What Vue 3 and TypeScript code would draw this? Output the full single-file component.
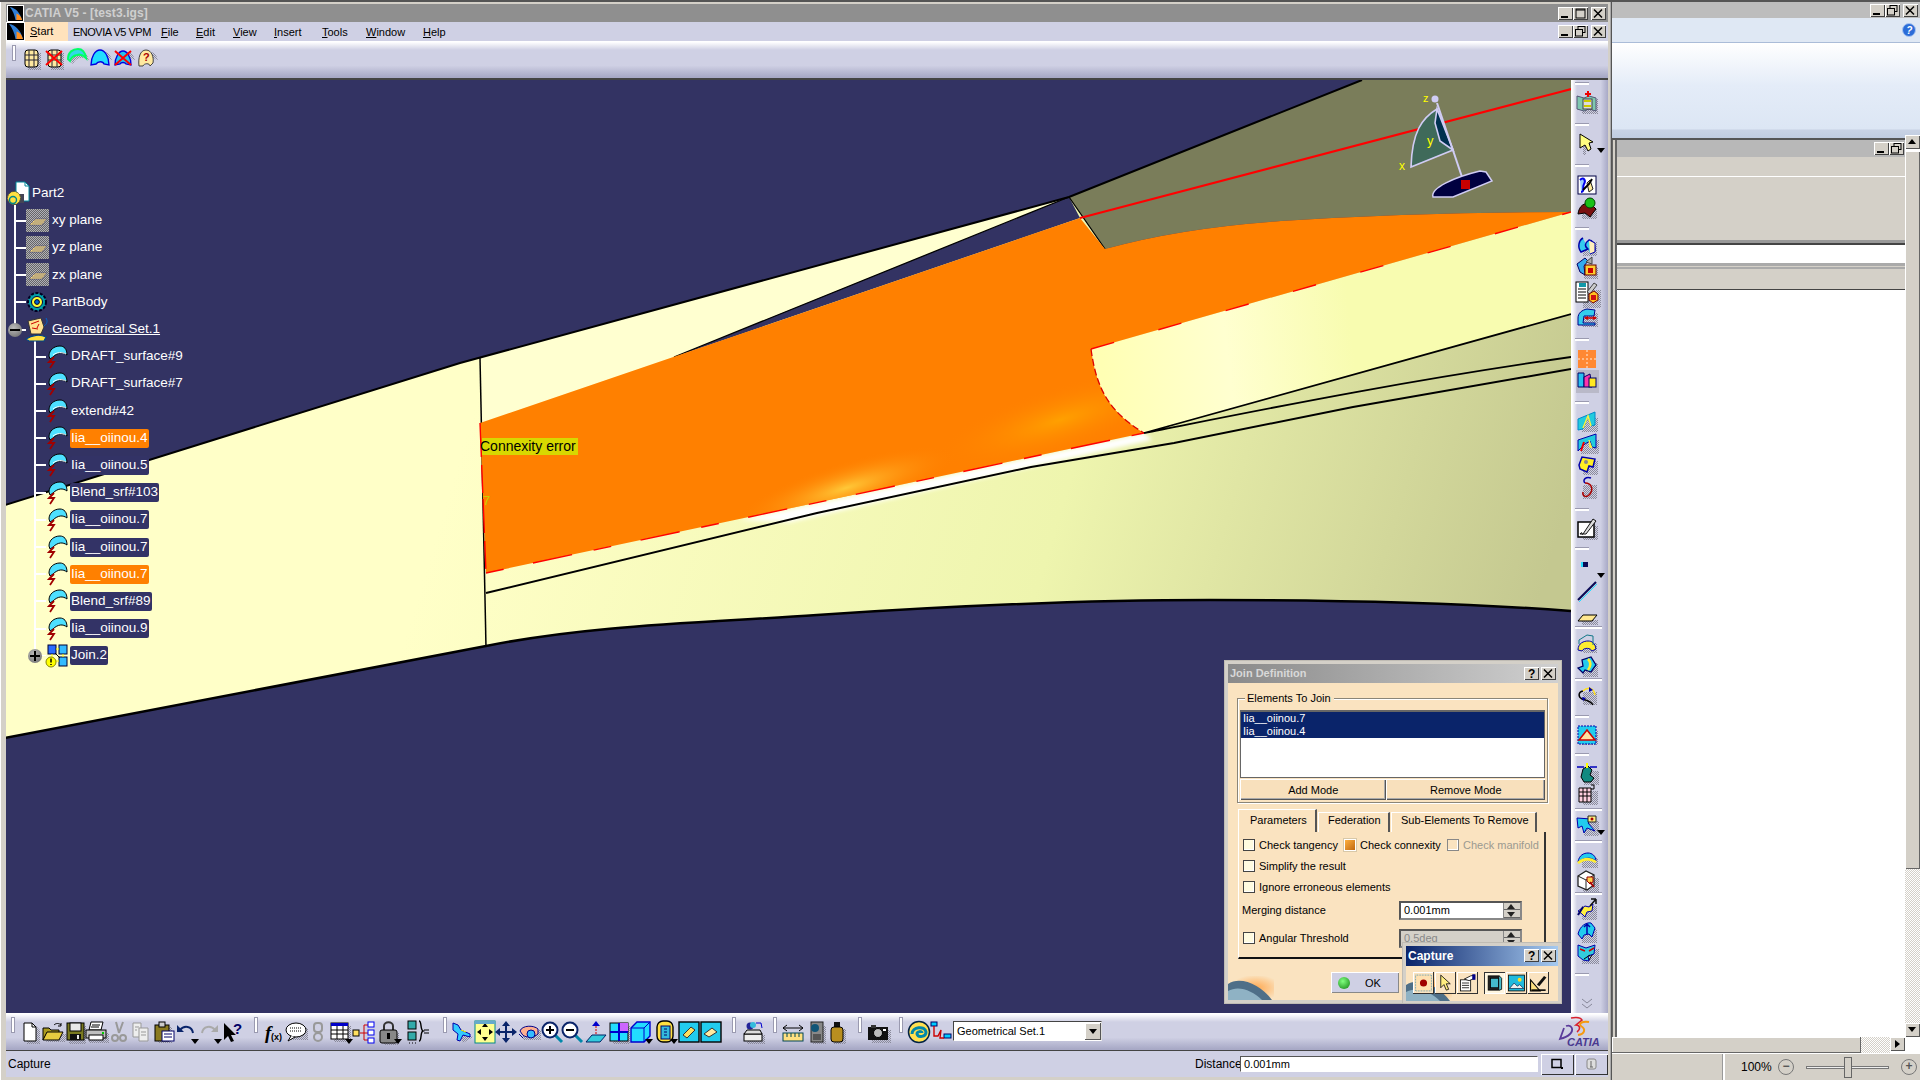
<script setup lang="ts">
const S = (d: string) => `<path d="${d}" fill="url(#dither)" transform="translate(3 3)"/>`
const dome = 'M3 13C3 6 8 3 13 3c4 0 7 3 8 9-3-3-6-4-9-3-3 .6-6 3-7 6z'
const X = '<path d="M4 5L20 19M20 5L4 19" stroke="#f00" stroke-width="2"/>'
const barrel = '<rect x="6" y="4" width="13" height="17" rx="3" fill="#ffe9a0" stroke="#000"/><path d="M10 4v17M15 4v17M6 9h13M6 14h13" stroke="#223" />'
const ICON: Record<string, string> = {
  barrel: S('M6 4h13v17H6z') + barrel,
  barrelx: S('M6 4h13v17H6z') + barrel + X,
  domeg: S(dome) + `<path d="${dome}" fill="#33d8e8" stroke="#00ff66" stroke-width="2"/>`,
  domeb: S(dome) + `<path d="M3 19C3 11 7 4 12 4s9 7 9 15l-5-1c-1-3-6-3-8 0z" fill="#22ddff" stroke="#0000e0" stroke-width="1.4"/>`,
  domex: S(dome) + `<path d="M4 19C4 11 8 5 12 5s8 6 8 14l-5-1c-1-2-5-2-6 0z" fill="#22c4f0" stroke="#0000e0" stroke-width="1.4"/>` + X,
  domeq: S(dome) + `<path d="M5 20c-1-8 1-16 7-16s8 8 7 13l-3 3c0-3-6-3-7 0z" fill="#ffe9a0" stroke="#444"/><text x="9" y="15" font-size="11" font-weight="700" fill="#a00" font-family="Liberation Sans">?</text>`,
  surf: `<path d="M3 11C3 5 8 1 14 1c4 0 7 3 7 9-4-3-9-3-14 2l-3 2z" fill="#4de0ff" stroke="#000"/><path d="M8 12L3 17h5l-4 6" stroke="#a00000" stroke-width="1.800" fill="none"/>`,
  surfw: `<path d="M3 11C3 5 8 1 14 1c4 0 7 3 7 9-4-3-9-3-14 2l-3 2z" fill="#4de0ff" stroke="#000"/><path d="M7 10c4-3 9-3 13-1" stroke="#fff" fill="none"/><path d="M8 12L3 17h5l-4 6" stroke="#a00000" stroke-width="1.800" fill="none"/>`,
  plane: `<rect width="23" height="23" fill="url(#dither2)"/><path d="M3 16l6-6h12l-5 6z" fill="#ffdf80" stroke="#557" stroke-width=".8"/><path d="M6 14h11M8 12h11" stroke="#557" stroke-width=".7"/>`,
  part: `<path d="M9 0h9l4 4v15H9z" fill="#fff" stroke="#089"/><path d="M18 0v4h4" fill="none" stroke="#089"/><rect x="8" y="12" width="9" height="9" fill="#445"/><circle cx="7" cy="16" r="6.500" fill="#ffe040" stroke="#553" stroke-dasharray="3 1"/><circle cx="6" cy="18" r="3.500" fill="none" stroke="#088" stroke-width="1.400"/>`,
  body: `<circle cx="11" cy="12" r="9" fill="#00a0a8" stroke="#002" stroke-dasharray="3 1.5" stroke-width="2"/><circle cx="11" cy="12" r="5.5" fill="#ffff30" stroke="#004"/><circle cx="11" cy="12" r="2.4" fill="#06c" stroke="#002"/>`,
  gset: `<path d="M2 3l13-3 3 9-3 7H5z" fill="#ffe090" stroke="#333"/><path d="M5 6l8-3M6 10l6 1M13 6l-2 4" stroke="#c00"/><path d="M0 21c6-4 14-5 20-2l-2 4H3z" fill="#ffe040" stroke="#048" stroke-width="1.200"/><path d="M20 0c2 3 1 6-2 8" stroke="#06c" fill="none"/>`,
  join: `<rect x="2" y="1" width="8" height="9" fill="#2a6cff" stroke="#003"/><rect x="13" y="1" width="8" height="9" fill="#33bbff" stroke="#003"/><rect x="13" y="13" width="8" height="9" fill="#33bbff" stroke="#003"/><path d="M10 5h3M10 17h3M6 10v3M17 10v3" stroke="#ff0"/><path d="M9 9l5 5" stroke="#000"/><circle cx="5" cy="18" r="5" fill="#ff0" stroke="#880"/><path d="M5 14.500v4M5 20v1" stroke="#000" stroke-width="1.500"/>`,
  new: S('M6 3h9l4 4v14H6z') + `<path d="M6 3h8l4 4v14H6z" fill="#fff" stroke="#000"/><path d="M14 3v4h4" fill="none" stroke="#000"/>`,
  open: S('M2 19h19l2-8H6z') + `<path d="M2 8h6l2 2h8v3H6l-4 7z" fill="#aa9a20" stroke="#000"/><path d="M2 20l4-8h16l-4 8z" fill="#e6cc40" stroke="#000"/><path d="M13 5c2-2 5-2 7 0" stroke="#000" fill="none"/><path d="M20 3v3h-3" stroke="#000" fill="none"/>`,
  save: S('M3 3h17v18H3z') + `<rect x="4" y="3" width="17" height="17" fill="#7a7a20" stroke="#000"/><rect x="7" y="3" width="11" height="8" fill="#e8e8e8" stroke="#000"/><rect x="7" y="14" width="11" height="6" fill="#111"/><rect x="14" y="15" width="2" height="4" fill="#eee"/>`,
  print: S('M2 10h20v10H2z') + `<path d="M7 2h12l-2 8H5z" fill="#fff" stroke="#000"/><path d="M8 5h8M7 7h8" stroke="#000"/><rect x="2" y="10" width="20" height="8" fill="#c0c0c0" stroke="#000"/><rect x="5" y="15" width="14" height="5" fill="#fff" stroke="#000"/><rect x="18" y="12" width="2" height="2" fill="#0c0"/>`,
  cut: `<path d="M9 2l3 11M16 2l-4 11" stroke="#999" stroke-width="2"/><circle cx="8" cy="18" r="3" fill="none" stroke="#999" stroke-width="2"/><circle cx="16" cy="18" r="3" fill="none" stroke="#999" stroke-width="2"/>`,
  copy: `<path d="M5 3h8v14H5z" fill="#eee" stroke="#999"/><path d="M11 8h9v13h-9z" fill="#eee" stroke="#999"/><path d="M13 12h5M13 15h5M7 7h4M7 10h2" stroke="#999"/>`,
  paste: S('M4 4h14v16H4z') + `<rect x="4" y="5" width="14" height="16" fill="#8a7a20" stroke="#000"/><rect x="8" y="2" width="6" height="5" fill="#ccc" stroke="#000"/><rect x="11" y="11" width="12" height="10" fill="#fff" stroke="#006"/><path d="M13 14h8M13 17h8" stroke="#006"/>`,
  undo: `<path d="M6 10c4-5 12-4 13 3" fill="none" stroke="#0a246a" stroke-width="2"/><path d="M3 5v7h7z" fill="#0a246a"/>`,
  redo: `<path d="M18 10c-4-5-12-4-13 3" fill="none" stroke="#aaa" stroke-width="2"/><path d="M21 5v7h-7z" fill="#aaa"/>`,
  what: `<path d="M3 3v17l4-4 3 6 3-1-3-6h5z" fill="#000"/><text x="12" y="14" font-size="15" font-weight="700" fill="#006" font-family="Liberation Sans">?</text>`,
  fx: `<text x="3" y="19" font-size="19" font-family="Liberation Serif" font-style="italic" font-weight="700">f</text><text x="9" y="20" font-size="9" font-family="Liberation Sans" font-weight="700">(x)</text>`,
  bubble: S('M3 5h18v12H3z') + `<ellipse cx="12" cy="10" rx="10" ry="7" fill="#fff" stroke="#000"/><path d="M7 16l-3 5 7-4" fill="#fff" stroke="#000"/><path d="M6 8h11M6 11h11" stroke="#000" stroke-dasharray="1 1"/>`,
  chain: `<rect x="8" y="3" width="8" height="9" rx="3" fill="none" stroke="#999" stroke-width="2"/><circle cx="12" cy="17" r="4" fill="none" stroke="#999" stroke-width="2"/>`,
  table: S('M3 3h17v16H3z') + `<rect x="3" y="3" width="17" height="16" fill="#fff" stroke="#000"/><rect x="3" y="3" width="17" height="3" fill="#0000c8"/><path d="M3 10h17M3 14h17M9 6v13M15 6v13" stroke="#000"/>`,
  tree: `<rect x="1" y="10" width="6" height="6" fill="#ffe060" stroke="#000"/><path d="M8 13h4M12 5v15M12 5h4M12 13h4M12 20h4" stroke="#c00"/><rect x="16" y="2" width="6" height="5" fill="#fff" stroke="#00e"/><rect x="16" y="10" width="6" height="5" fill="#fff" stroke="#00e"/><rect x="16" y="18" width="6" height="5" fill="#fff" stroke="#00e"/>`,
  lock: S('M4 10h15v12H4z') + `<path d="M7 10V6c0-5 9-5 9 0v4" fill="none" stroke="#333" stroke-width="2"/><rect x="3" y="10" width="17" height="13" rx="2" fill="#888" stroke="#000"/><rect x="10" y="13" width="3" height="6" fill="#000"/>`,
  eqs: `<rect x="2" y="1" width="8" height="8" fill="#3aa" stroke="#000"/><rect x="2" y="12" width="8" height="8" fill="#3aa" stroke="#000"/><path d="M13 1c3 0 1 9 4 10-3 1-1 10-4 10" fill="none" stroke="#000" stroke-width="1.400"/><path d="M18 10h5M18 13h5" stroke="#000"/><path d="M3 23h1M6 23h1M9 23h1" stroke="#000"/>`,
  air: S('M4 6l16 8-10 6z') + `<path d="M3 3l5 2 3 5 9 4v3l-7-2-3 6-3-1 1-6-5-4z" fill="#33ccff" stroke="#00a"/><path d="M11 10l5 2" stroke="#ff0"/>`,
  fit: `<rect x="2" y="1" width="20" height="22" fill="#ffff90" stroke="#088"/><path d="M12 3l3 4H9zM12 21l3-4H9zM4 12l4-3v6zM20 12l-4-3v6z" fill="#000"/><rect x="2" y="1" width="20" height="3" fill="#66aacc"/>`,
  pan: `<path d="M12 3v18M3 12h18" stroke="#0a246a" stroke-width="2"/><path d="M12 1l4 5H8zM12 23l4-5H8zM1 12l5-4v8zM23 12l-5-4v8z" fill="#0a246a"/>`,
  rot: S('M3 7h18v10H3z') + `<path d="M3 11c2-6 14-6 18-2v5c-4 4-14 4-16 0z" fill="#ffb090" stroke="#008"/><circle cx="14" cy="14" r="4" fill="#33bbff" stroke="#008"/><path d="M2 14l4 4" stroke="#008"/>`,
  zin: `<path d="M15 15l7 7" stroke="#08a" stroke-width="3"/><circle cx="10" cy="10" r="7.500" fill="#fff" stroke="#0a246a" stroke-width="2"/><path d="M10 6v8M6 10h8" stroke="#000" stroke-width="2"/>`,
  zout: `<path d="M15 15l7 7" stroke="#08a" stroke-width="3"/><circle cx="10" cy="10" r="7.500" fill="#fff" stroke="#0a246a" stroke-width="2"/><path d="M6 10h8" stroke="#000" stroke-width="2"/>`,
  norm: `<path d="M2 22l6-7h14l-6 7z" fill="#33ccdd" stroke="#026"/><path d="M12 3v12" stroke="#c00" stroke-dasharray="2 1"/><path d="M12 1l4 5H8z" fill="#00c"/>`,
  split: S('M3 3h17v18H3z') + `<rect x="3" y="3" width="18" height="18" fill="#22ddff" stroke="#000"/><rect x="12" y="3" width="9" height="9" fill="#cc66ff"/><path d="M3 12h18M12 3v18" stroke="#00c" stroke-width="2"/>`,
  cube: `<path d="M3 8l6-6h13v14l-6 6H3z" fill="#22ddff" stroke="#00c" stroke-width="1.400"/><path d="M3 8h13v14M16 8l6-6" stroke="#00c" fill="none"/>`,
  cyl: `<rect x="4" y="1" width="16" height="21" rx="6" fill="#ffe040" stroke="#000" stroke-width="1.400"/><rect x="8" y="6" width="9" height="13" fill="#33bbdd" stroke="#006"/><path d="M11 9h3M11 12h3M11 15h3" stroke="#006"/>`,
  tile1: `<rect x="2" y="2" width="20" height="20" fill="#22ccee" stroke="#000" stroke-width="1.400"/><path d="M6 15l8-8 4 3-8 8z" fill="#ffe060" stroke="#333"/>`,
  tile2: `<rect x="2" y="2" width="20" height="20" fill="#22ccee" stroke="#000" stroke-width="1.400"/><path d="M5 14l8-6 5 4-8 5z" fill="#ffeaa0" stroke="#333"/>`,
  sheet: S('M3 12h18v9H3z') + `<circle cx="9" cy="6" r="3.500" fill="#229" /><circle cx="12" cy="5" r="3" fill="#3bd"/><path d="M15 3h5l1 5" fill="none" stroke="#00c"/><rect x="3" y="14" width="18" height="7" fill="#eee" stroke="#000"/><path d="M6 10h13l2 4H3z" fill="#ddd" stroke="#000"/>`,
  ruler: `<path d="M2 8h20M2 8l4-3M2 8l4 3M22 8l-4-3M22 8l-4 3" stroke="#000" fill="none"/><rect x="2" y="13" width="20" height="8" fill="#ffe080" stroke="#045"/><path d="M6 13v4M10 13v4M14 13v4M18 13v4" stroke="#045"/>`,
  scan: S('M6 3h13v18H6z') + `<rect x="7" y="2" width="12" height="20" fill="#888" stroke="#222"/><circle cx="11" cy="8" r="4" fill="#157" /><rect x="9" y="14" width="8" height="6" fill="#555"/>`,
  weight: S('M6 6h12v15H6z') + `<rect x="9" y="2" width="6" height="5" fill="#111"/><rect x="6" y="7" width="12" height="15" rx="3" fill="#b98f20" stroke="#000"/>`,
  cam: S('M3 7h19v13H3z') + `<rect x="2" y="7" width="20" height="13" fill="#111" /><circle cx="12" cy="13" r="4.500" fill="#bbb" stroke="#000"/><rect x="5" y="5" width="5" height="3" fill="#333"/><rect x="17" y="9" width="3" height="2" fill="#fff"/>`,
  swirl: `<circle cx="12" cy="12" r="10.500" fill="#ffe050" stroke="#024" stroke-width="1.500"/><path d="M5 14c0-7 13-9 14-2 0 5-8 6-9 2 0-3 5-3 5-1" fill="none" stroke="#08a" stroke-width="3"/>`,
  link: `<rect x="2" y="2" width="6" height="4" fill="#0cf" stroke="#006"/><rect x="15" y="14" width="7" height="4" fill="#0cf" stroke="#006"/><path d="M5 6v10h4l3-6-1 8h4" fill="none" stroke="#c00" stroke-width="1.400"/>`,
  rec: `<rect x="2" y="2" width="20" height="20" fill="#ffe0b0" stroke="#38a" stroke-dasharray="1 1"/><circle cx="12" cy="12" r="4.500" fill="#a00000"/>`,
  arrow: `<path d="M6 2l12 11h-5l3 7-3 1-3-7-4 4z" fill="#ffee80" stroke="#000"/>`,
  docpen: `<rect x="3" y="8" width="13" height="14" fill="#fff" stroke="#000"/><path d="M5 12h9M5 15h9M5 18h9" stroke="#000"/><path d="M8 7l8-4 5-1v4l-7 3z" fill="#fff" stroke="#000"/><rect x="18" y="1" width="4" height="7" fill="#008"/>`,
  frame: `<rect x="4" y="3" width="14" height="18" fill="#222" stroke="#000"/><rect x="7" y="6" width="10" height="12" fill="#44bbcc" stroke="#000"/><path d="M18 3l3 3v14l-3 1" fill="#44bbcc" stroke="#000"/>`,
  photo: `<rect x="2" y="2" width="20" height="20" fill="#22bbdd" stroke="#000"/><circle cx="16" cy="8" r="2.500" fill="#ffdf20"/><path d="M3 19l6-7 4 4 3-2 5 5z" fill="#eee" stroke="#135"/>`,
  set: `<path d="M2 22V8l12 14z" fill="#ffe080" stroke="#000" stroke-width="1.300"/><path d="M3 21h18" stroke="#000" stroke-width="2"/><path d="M10 14l9-11 3 2-9 11z" fill="#111"/>`,
  rarrow: S('M5 3l6 10h-3v8H5z') + `<path d="M5 3l13 8-4 1 2 6-3 2-3-6-5 3z" fill="#ffff80" stroke="#000"/>`,
  rfill: `<rect x="3" y="3" width="18" height="18" fill="#fff" stroke="#004"/><path d="M5 7c4-4 6 1 4 4-2 3 1 8-3 8" stroke="#00e" fill="#9cf" stroke-width="2"/><path d="M15 7l3 9-4 3-2-9z" fill="#ffeb9a" stroke="#222"/><path d="M8 17l6-6 3-5" stroke="#000" stroke-width="2" fill="none"/>`,
  rgreen: S('M4 10h15v10H4z') + `<path d="M3 18c1-8 6-12 13-10l5 5-6 8-5-4z" fill="#7a1010" stroke="#000"/><circle cx="15" cy="7" r="5" fill="#18c018" stroke="#040"/>`,
  rloop: S('M5 4h14v14H5z') + `<path d="M8 3c-4 2-6 9-2 14l7-3c-4-3-3-6 1-9 3 0 6 3 6 10l-5 3" fill="#33ccee" stroke="#00a" stroke-width="1.500"/><path d="M14 5l6 3v9l-5 2" fill="#ffeebb" stroke="#00a"/>`,
  rbox: S('M6 8h14v12H6z') + `<path d="M2 8l8-6 3 3-4 5 1 9-5-3z" fill="#33aaee" stroke="#006"/><path d="M11 6l6-5v7z" fill="#aaa" stroke="#444"/><rect x="10" y="9" width="11" height="10" fill="#ffcc30" stroke="#600"/><rect x="13" y="12" width="5" height="5" fill="#c00"/>`,
  rdoc: S('M5 6h18v18H5z') + `<rect x="1" y="1" width="12" height="20" fill="#fff" stroke="#000"/><path d="M3 8h8M3 11h8M3 14h8M3 17h8" stroke="#000"/><rect x="4" y="2" width="7" height="4" fill="#19a"/><path d="M12 11l7-9 3 2-7 9z" fill="#ccc" stroke="#444"/><path d="M14 13l5-3 4 3v6l-5 3-4-3z" fill="#ffc020" stroke="#700"/><rect x="16" y="14" width="5" height="5" fill="#d01010"/>`,
  rdist: S('M4 4h16v14H4z') + `<path d="M3 12c0-5 4-8 9-9l8 1-1 6H9l-1 7h12v2H3z" fill="#33ccee" stroke="#008"/><path d="M10 12h11" stroke="#c00" stroke-width="1.500"/><path d="M9 12l4-2v4zM22 12l-4-2v4z" fill="#c00"/>`,
  ro: `<rect x="3" y="3" width="18" height="18" fill="#ff8833" /><path d="M3 12h18M12 3v18" stroke="#ffbb88" stroke-dasharray="2 2" stroke-width="2"/>`,
  rmerge: `<rect x="1" y="1" width="23" height="23" fill="#b9b9c8" /><path d="M3 4h6v14H3z" fill="#28c0f0" stroke="#006"/><path d="M9 8l6-3 2 13H9z" fill="#ff33aa" stroke="#006"/><rect x="14" y="9" width="7" height="9" fill="#ffe820" stroke="#006"/>`,
  rw1: S('M4 5h16v14H4z') + `<path d="M3 20V9l17-7v13l-4 1-3-9-5 12z" fill="#22ccdd" stroke="#08c"/><path d="M8 18l5-12 3 10" fill="none" stroke="#ffef40" stroke-width="1.500"/>`,
  rw2: S('M3 6h18v14H3z') + `<path d="M3 20V9l18-6v14l-4-1-2-6-5 3-3 3z" fill="#22ccdd" stroke="#00a"/><path d="M6 20l3-9" stroke="#e00" stroke-width="2"/><path d="M15 17l-1-8 3 8" fill="#ffef40" stroke="#fe4"/>`,
  rw3: S('M5 5h15v14H5z') + `<path d="M4 12l3-8 13 2-2 8-4-1-2 6-7-3z" fill="#ffee22" stroke="#00a" stroke-width="1.500"/><circle cx="11" cy="9" r="2" fill="#888"/>`,
  rs: S('M5 6h14v14H5z') + `<path d="M16 2c-5-2-9 2-6 5" fill="none" stroke="#00a" stroke-width="1.500"/><path d="M10 7c7 0 9 7 4 12-3 3-7 1-6-3" fill="none" stroke="#a00" stroke-width="1.500"/>`,
  rsketch: S('M5 7h15v14H5z') + `<rect x="3" y="6" width="16" height="15" fill="#fff" stroke="#000" stroke-width="1.500"/><path d="M5 18c3-4 1 2 3 0l10-15 3 2-10 13z" fill="#ddd" stroke="#111"/>`,
  rpoint: `<rect x="8" y="6" width="5" height="5" fill="#0a0a55"/><rect x="6" y="6" width="2" height="5" fill="#22ddff"/>`,
  rline: `<path d="M3 22L21 4" stroke="#0a0a55" stroke-width="2.200"/><path d="M4 24L22 6" stroke="#22ddff"/>`,
  rplane: S('M4 15h16v5H4z') + `<path d="M3 19l5-6h14l-5 6z" fill="#ffe890" stroke="#000"/>`,
  rswp: S('M5 9h14v10H5z') + `<path d="M3 19c0-7 6-9 10-9s7 2 8 8l-4 2c-1-3-8-4-10 0z" fill="#ffee30" stroke="#00a"/><path d="M4 13V9l8-5 6 1v9" fill="none" stroke="#178"/>`,
  rswp2: S('M5 6h15v14H5z') + `<path d="M3 14l5-2-1-6 9-3 5 8-5 7-6-2-2 3z" fill="#22ccee" stroke="#006" stroke-width="1.300"/><path d="M13 5c3 3 3 7 0 11" fill="none" stroke="#ffee30" stroke-width="2.500"/>`,
  rcurve: S('M5 6h14v13H5z') + `<path d="M8 8C3 9 3 14 7 16c4 1 9 2 11 6" fill="none" stroke="#000" stroke-width="1.500"/><path d="M8 8c5-5 11-3 12 4" fill="none" stroke="#ffe020" stroke-width="1.500"/><path d="M14 4l4 3-4 2zM7 14l4 1-3 3z" fill="#00a"/>`,
  rtile: S('M4 5h16v14H4z') + `<rect x="3" y="3" width="18" height="18" fill="#22ccee" stroke="#00a" stroke-dasharray="2 1"/><path d="M4 17l8-10 8 10z" fill="#ffe0a0" stroke="#c00" stroke-width="1.500"/>`,
  rgear: S('M6 7h15v14H6z') + `<path d="M8 8l5-3 4 4-2 5 4 3-3 4H9l-3-5z" fill="#118a80" stroke="#000"/><path d="M2 6h7M15 6h7" stroke="#00b" stroke-width="1.500"/><path d="M12 2v5" stroke="#ff0" stroke-width="2"/>`,
  rgrid: S('M5 5h15v14H5z') + `<path d="M4 5h12v14H4z" fill="#ffd0e0" stroke="#000"/><path d="M8 5v14M12 5v14M4 9h12M4 13h12" stroke="#000"/><path d="M16 2h3v4h-3" fill="none" stroke="#000"/>`,
  rfly: S('M6 5h15v15H6z') + `<path d="M2 5l14 1-3 4 7 8-8-3-3 5-2-7-4 2z" fill="#22ccee" stroke="#00a"/><path d="M13 3h8v6h-8z" fill="#ffee80" stroke="#222"/><circle cx="17" cy="6" r="1.500" fill="#a00"/>`,
  rarc: S('M4 8h16v10H4z') + `<path d="M3 15c1-7 6-9 10-9s8 3 8 8c-5-4-11-4-18 1z" fill="#22ccee" stroke="#00a"/><path d="M3 16c6-5 12-5 18-1" fill="none" stroke="#ffee30" stroke-width="2.500"/>`,
  rbox2: S('M5 7h16v14H5z') + `<path d="M3 8l8-5 8 4v10l-7 5-9-4z" fill="#fff" stroke="#222" stroke-width="1.300"/><path d="M3 8l8 4 8-5M11 12v10" stroke="#222" fill="none"/><path d="M12 9h6v5l-3 2-3-3z" fill="#ffd050" stroke="#900"/><path d="M15 14l4 5" stroke="#a00" stroke-width="2"/>`,
  rup: S('M4 6h15v14H4z') + `<path d="M3 14l7-5 4 1 4-3-1 7-5 1-2 5-3-3z" fill="#ffef40" stroke="#00a"/><path d="M3 18l5-8" stroke="#006" stroke-width="2"/><path d="M15 9l6-7M21 2v5M21 2h-5" stroke="#111" stroke-width="1.500" fill="none"/>`,
  rdomeup: S('M4 7h15v14H4z') + `<path d="M3 15c2-8 8-12 13-11l4 5-3 9-3-3-5 1-2 4z" fill="#22ccee" stroke="#00a"/><path d="M12 15V6M9 8l3-3 3 3" stroke="#00a" fill="none" stroke-width="1.500"/>`,
  rmask: S('M4 6h17v15H4z') + `<path d="M3 5l8 3 9-3-1 9-6 2 1 5-6-1-5-4z" fill="#33ccdd" stroke="#00a"/><path d="M5 9l5 2M14 11l5-3" stroke="#c00" stroke-width="1.500"/><path d="M9 19l6-4M14 20l3-5" stroke="#000"/>`,
  chev: `<path d="M7 7l5 4 5-4M7 12l5 4 5-4" fill="none" stroke="#889" />`,
  rdoc0: S('M4 5h16v15H4z') + '<path d="M2 5l7 2 5-2 7 2v13l-7-2-5 2-7-2z" fill="#7fc8b0" stroke="#557"/><rect x="8" y="8" width="9" height="10" fill="#ddd" stroke="#444"/><path d="M9 10h7M9 15h7" stroke="#cc0" stroke-width="2"/><path d="M13 0v6M10 3h6" stroke="#e00" stroke-width="2"/>',
}

const WB: Record<string, string> = {
  min: '<path d="M3 10h7" stroke="#000" stroke-width="2"/>',
  max: '<rect x="3" y="2" width="9" height="9" fill="none" stroke="#000"/><path d="M3 3h9" stroke="#000"/>',
  res: '<rect x="5" y="1.500" width="7" height="6" fill="none" stroke="#000"/><rect x="2.500" y="4.500" width="7" height="6.500" fill="#d4d0c8" stroke="#000"/>',
  x: '<path d="M3 2.500l8 8M11 2.500l-8 8" stroke="#000" stroke-width="1.500"/>',
  q: '<text x="4" y="11" font-size="12" font-weight="700" font-family="Liberation Sans">?</text>',
}

type Cell = [number, string, boolean?]
const cells = (list: Cell[], end: number) =>
  list.map((it, i) => ({
    name: it[1],
    drop: !!it[2],
    size: (i < list.length - 1 ? list[i + 1][0] : end) - it[0],
  }))

const MENU: [number, string, string][] = [
  [73, '', 'ENOVIA V5 VPM'],
  [161, 'F', 'ile'],
  [196, 'E', 'dit'],
  [233, 'V', 'iew'],
  [274, 'I', 'nsert'],
  [322, 'T', 'ools'],
  [366, 'W', 'indow'],
  [423, 'H', 'elp'],
]
const menu = MENU.map((m, i) => ({ u: m[1], t: m[2], w: (MENU[i + 1]?.[0] ?? 470) - m[0] }))

const topIcons = ['barrel', 'barrelx', 'domeg', 'domeb', 'domex', 'domeq']

const bottom = cells(
  [
    [12, '|'], [30, 'new'], [53, 'open'], [75, 'save'], [96, 'print'], [119, 'cut'], [140, 'copy'], [163, 'paste'],
    [186, 'undo', true], [209, 'redo', true], [233, 'what'], [255, '|'], [274, 'fx'], [296, 'bubble'], [318, 'chain'],
    [340, 'table', true], [364, 'tree'], [389, 'lock', true], [418, 'eqs'], [444, '|'], [462, 'air'], [485, 'fit'],
    [506, 'pan'], [529, 'rot'], [552, 'zin'], [572, 'zout'], [596, 'norm'], [619, 'split'], [640, 'cube', true],
    [665, 'cyl', true], [689, 'tile1'], [711, 'tile2'], [733, '|'], [753, 'sheet'], [774, '|'], [793, 'ruler'],
    [816, 'scan'], [837, 'weight'], [859, '|'], [878, 'cam'], [900, '|'], [919, 'swirl'], [941, 'link'],
  ],
  965,
)

const right = cells(
  [
    [83, '|'], [103, 'rdoc0'], [124, '|'], [143, 'rarrow', true], [165, '|'], [185, 'rfill'], [208, 'rgreen'], [228, '|'],
    [247, 'rloop'], [268, 'rbox'], [293, 'rdoc'], [318, 'rdist'], [339, '|'], [359, 'ro'], [381, 'rmerge'], [402, '|'],
    [422, 'rw1'], [443, 'rw2'], [465, 'rw3'], [488, 'rs'], [509, '|'], [528, 'rsketch'], [548, '|'], [568, 'rpoint', true],
    [590, 'rline'], [614, 'rplane'], [627, '-'], [643, 'rswp'], [666, 'rswp2'], [679, '-'], [695, 'rcurve'], [716, '|'],
    [735, 'rtile'], [754, '|'], [773, 'rgear'], [795, 'rgrid'], [809, '-'], [825, 'rfly', true], [841, '-'], [859, 'rarc'],
    [880, 'rbox2'], [893, '-'], [909, 'rup'], [931, 'rdomeup'], [952, 'rmask'], [974, '|'], [1004, 'chev'],
  ],
  1022,
)

type Row = { icon: string; label: string; lvl: number; state?: string; u?: boolean; sw?: string }
const rows: Row[] = [
  { icon: 'part', label: 'Part2', lvl: 0 },
  { icon: 'plane', label: 'xy plane', lvl: 1 },
  { icon: 'plane', label: 'yz plane', lvl: 1 },
  { icon: 'plane', label: 'zx plane', lvl: 1 },
  { icon: 'body', label: 'PartBody', lvl: 1 },
  { icon: 'gset', label: 'Geometrical Set.1', lvl: 1, u: true, sw: 'minus' },
  { icon: 'surfw', label: 'DRAFT_surface#9', lvl: 2 },
  { icon: 'surfw', label: 'DRAFT_surface#7', lvl: 2 },
  { icon: 'surfw', label: 'extend#42', lvl: 2 },
  { icon: 'surfw', label: 'Iia__oiinou.4', lvl: 2, state: 'hot' },
  { icon: 'surfw', label: 'Iia__oiinou.5', lvl: 2, state: 'sel' },
  { icon: 'surf', label: 'Blend_srf#103', lvl: 2, state: 'sel' },
  { icon: 'surf', label: 'Iia__oiinou.7', lvl: 2, state: 'sel' },
  { icon: 'surf', label: 'Iia__oiinou.7', lvl: 2, state: 'sel' },
  { icon: 'surf', label: 'Iia__oiinou.7', lvl: 2, state: 'hot' },
  { icon: 'surf', label: 'Blend_srf#89', lvl: 2, state: 'sel' },
  { icon: 'surf', label: 'Iia__oiinou.9', lvl: 2, state: 'sel' },
  { icon: 'join', label: 'Join.2', lvl: 3, state: 'sel', sw: 'plus' },
]

const captureIcons = ['rec', 'arrow', 'docpen', 'frame', 'photo', 'set']
const checks1 = [
  { label: 'Check tangency', w: 101 },
  { label: 'Check connexity', w: 103, on: true },
  { label: 'Check manifold', w: 100, off: true },
]
</script>

<template>
  <div class="screen">
    <svg class="defs" width="0" height="0">
      <defs>
        <pattern id="dither" width="2" height="2" patternUnits="userSpaceOnUse">
          <rect width="1" height="1" fill="#8a8a9a" /><rect x="1" y="1" width="1" height="1" fill="#8a8a9a" />
        </pattern>
        <pattern id="dither2" width="2" height="2" patternUnits="userSpaceOnUse">
          <rect width="2" height="2" fill="#b0b0b8" /><rect width="1" height="1" fill="#666" /><rect x="1" y="1" width="1" height="1" fill="#666" />
        </pattern>
        <linearGradient id="baseG" gradientUnits="userSpaceOnUse" x1="500" y1="320" x2="1530" y2="630">
          <stop offset="0" stop-color="#ffffc8" /><stop offset=".55" stop-color="#eef5ae" /><stop offset="1" stop-color="#c4c890" />
        </linearGradient>
        <linearGradient id="patchG" gradientUnits="userSpaceOnUse" x1="1100" y1="350" x2="1350" y2="320">
          <stop offset="0" stop-color="#ffffb4" /><stop offset=".5" stop-color="#ffffd0" /><stop offset="1" stop-color="#f8fcb0" />
        </linearGradient>
        <radialGradient id="hotG">
          <stop offset="0" stop-color="#ffc838" /><stop offset="1" stop-color="#ff8000" stop-opacity="0" />
        </radialGradient>
        <radialGradient id="warmG">
          <stop offset="0" stop-color="#ffa000" /><stop offset="1" stop-color="#ff8000" stop-opacity="0" />
        </radialGradient>
        <filter id="soft" x="-20%" y="-100%" width="140%" height="300%"><feGaussianBlur stdDeviation="2" /></filter>
        <clipPath id="orangeClip">
          <path d="M480 423L1080 218L1105 249Q1180 228 1281 221Q1420 212 1571 212L1091 349C1096 385 1106 410 1144 433L486 573Z" />
        </clipPath>
        <radialGradient id="glow" cx=".6" cy=".5" r=".55">
          <stop offset="0" stop-color="#ffa850" /><stop offset="1" stop-color="#ffa850" stop-opacity="0" />
        </radialGradient>
      </defs>
    </svg>

    <div class="catia">
      <div class="title">
        <svg class="appicon" viewBox="0 0 16 16"><rect width="16" height="16" fill="#000" /><path d="M2 1c6 1 11 6 13 14H8C7 9 5 5 2 1z" fill="#2e7fd8" /><path d="M9 8c3 1 5 3 6 7H9z" fill="#ff9020" /></svg>
        <span class="title-text">CATIA V5 - [test3.igs]</span>
        <span class="btns"><button v-for="b in ['min','max']" :key="b" class="wb"><svg viewBox="0 0 15 13" v-html="WB[b]"></svg></button><button class="wb gap"><svg viewBox="0 0 15 13" v-html="WB.x"></svg></button></span>
      </div>
      <div class="menubar">
        <svg class="appicon big" viewBox="0 0 16 16"><rect width="16" height="16" fill="#000" /><path d="M2 1c6 1 11 6 13 14H8C7 9 5 5 2 1z" fill="#2e7fd8" /><path d="M9 8c3 1 5 3 6 7H9z" fill="#ff9020" /></svg>
        <span class="start"><u>S</u>tart</span>
        <span v-for="m in menu" :key="m.t" class="mi" :class="{ tight: !m.u }" :style="{ width: m.w + 'px' }"><u v-if="m.u">{{ m.u }}</u>{{ m.t }}</span>
        <span class="btns"><button class="wb"><svg viewBox="0 0 15 13" v-html="WB.min"></svg></button><button class="wb"><svg viewBox="0 0 15 13" v-html="WB.res"></svg></button><button class="wb gap"><svg viewBox="0 0 15 13" v-html="WB.x"></svg></button></span>
      </div>
      <div class="tbar top">
        <i class="handle"></i>
        <svg v-for="(k, i) in topIcons" :key="i" class="ic" viewBox="0 0 24 24" v-html="ICON[k]"></svg>
      </div>

      <div class="middle">
        <div class="viewport">
          <svg class="scene" viewBox="6 80 1565 933">
            <rect x="5" y="80" width="1566" height="933" fill="#333363" />
            <path d="M5 505L460 363L1069 197L1105 249L1571 212V611C1480 604 1350 600 1210 600C1100 600 950 606 817 615C700 623 590 625 486 646L5 738Z" fill="url(#baseG)" />
            <path d="M5 738L486 646C590 625 700 623 817 615C950 606 1100 600 1210 600C1350 600 1480 604 1571 611" fill="none" stroke="#000" stroke-width="2.500" />
            <path d="M1069 197L1362 80H1571V212Q1420 212 1281 221Q1180 228 1105 249Z" fill="#7a7d5a" />
            <path d="M480 358L1069 197L674 357L480 423Z" fill="#ffffd0" />
            <path d="M1069 197L1080 218L674 357Z" fill="#333363" />
            <path d="M5 505L460 363L1069 197L1362 80" fill="none" stroke="#000" stroke-width="2" />
            <path d="M1069 197L674 357M1069 197L1105 249" fill="none" stroke="#000" stroke-width="1.300" />
            <path d="M480 358L486 647" fill="none" stroke="#000" stroke-width="1.500" />
            <path d="M740 520L1144 433L1152 440L1000 474L790 522Z" fill="#fff" filter="url(#soft)" />
            <path d="M1091 349L1571 212V314L1144 433C1106 410 1096 385 1091 349Z" fill="url(#patchG)" />
            <path d="M480 423L1080 218L1105 249Q1180 228 1281 221Q1420 212 1571 212L1091 349C1096 385 1106 410 1144 433L486 573Z" fill="#ff8000" />
            <g clip-path="url(#orangeClip)">
              <ellipse cx="1060" cy="420" rx="130" ry="34" transform="rotate(-17 1060 420)" fill="url(#warmG)" />
              <ellipse cx="846" cy="488" rx="115" ry="26" transform="rotate(-17 846 488)" fill="url(#hotG)" />
            </g>
            <path d="M486 573L1144 433" fill="none" stroke="#f00" stroke-width="1.400" stroke-dasharray="18 30 40 22" />
            <path d="M1091 349L1571 212" fill="none" stroke="#f00" stroke-width="1.400" stroke-dasharray="24 46" />
            <path d="M1091 349C1096 385 1106 410 1144 433" fill="none" stroke="#d00" stroke-width="1.300" stroke-dasharray="7 3" />
            <path d="M480 423L486 573" fill="none" stroke="#f00" stroke-width="1.400" stroke-dasharray="34 8 28 6" />
            <path d="M1080 218L1560 92L1571 89" fill="none" stroke="#f00" stroke-width="2.200" />
            <path d="M1144 433L1571 314M1144 433C1246 413 1389 383 1571 357" fill="none" stroke="#000" stroke-width="1.800" />
            <path d="M486 593L817 513L1031 467L1174 443L1353 407L1571 369" fill="none" stroke="#000" stroke-width="2" />
            <text x="483" y="505" font-size="13" fill="#c8d000" font-family="Liberation Sans">7</text>
            <path d="M1437 109C1422 118 1412 132 1411 167L1453 150Z" fill="#3f6a5a" stroke="#d0ccf4" stroke-width="1.600" />
            <path d="M1437 109L1453 150L1440 141L1435 123Z" fill="#003050" stroke="#d0ccf4" stroke-width="1.600" />
            <path d="M1437 103L1462 177" stroke="#d0ccf4" stroke-width="2" />
            <circle cx="1435" cy="99" r="3.500" fill="#d0ccf4" />
            <path d="M1433 197C1430 188 1455 177 1480 171L1486 172L1492 181L1453 197Z" fill="#000040" stroke="#d0ccf4" stroke-width="1.500" />
            <rect x="1461" y="180" width="9" height="9" fill="#c80000" />
            <text x="1423" y="102" font-size="11" fill="#ffff00" font-family="Liberation Sans">z</text>
            <text x="1427" y="145" font-size="13" fill="#ffff00" font-family="Liberation Sans">y</text>
            <text x="1399" y="170" font-size="12" fill="#ffff00" font-family="Liberation Sans">x</text>
          </svg>

          <div class="tree">
            <i class="vl a"></i><i class="vl b"></i>
            <div v-for="(r, i) in rows" :key="i" class="row" :class="'l' + r.lvl">
              <i v-if="r.lvl" class="branch"></i>
              <i v-if="r.sw" class="knob" :class="r.sw"></i>
              <svg class="ic" viewBox="0 0 24 24" v-html="ICON[r.icon]"></svg>
              <span class="lbl" :class="[r.state, { ul: r.u }]">{{ r.label }}</span>
            </div>
          </div>

          <div class="tip">Connexity error</div>

          <section class="dlg join">
            <header class="dtitle grey"><span>Join Definition</span><span class="dbtn"><button class="wb"><svg viewBox="0 0 15 13" v-html="WB.q"></svg></button><button class="wb"><svg viewBox="0 0 15 13" v-html="WB.x"></svg></button></span></header>
            <div class="dbody">
              <svg class="planet" viewBox="0 0 46 24"><rect width="46" height="24" fill="url(#glow)" /><path d="M0 8C12 0 32 8 44 24H0Z" fill="#4f6f88" /><path d="M0 15C10 9 24 14 34 24H0Z" fill="#8fb2c4" /></svg>
              <div class="group">
                <span class="legend">Elements To Join</span>
                <div class="list">
                  <div class="li">Iia__oiinou.7</div>
                  <div class="li">Iia__oiinou.4</div>
                </div>
                <div class="mode"><button class="push m1">Add Mode</button><button class="push m2">Remove Mode</button></div>
              </div>
              <div class="tabs">
                <span class="tab on t1">Parameters</span><span class="tab t2">Federation</span><span class="tab t3">Sub-Elements To Remove</span>
              </div>
              <div class="panel">
                <div class="prow">
                  <label v-for="c in checks1" :key="c.label" class="chk" :class="{ dim: c.off }" :style="{ width: c.w + 'px' }"><i class="box" :class="{ on: c.on, dimb: c.off }"></i>{{ c.label }}</label>
                </div>
                <div class="prow"><label class="chk"><i class="box"></i>Simplify the result</label></div>
                <div class="prow"><label class="chk"><i class="box"></i>Ignore erroneous elements</label></div>
                <div class="prow merge"><span class="flabel">Merging distance</span><span class="spin"><span class="sval">0.001mm</span><i class="sbtns"><b class="up"></b><b class="down"></b></i></span></div>
                <div class="prow angular"><label class="chk"><i class="box"></i>Angular Threshold</label><span class="spin dis"><span class="sval">0.5deg</span><i class="sbtns"><b class="up"></b><b class="down"></b></i></span></div>
              </div>
              <div class="foot">
                <button class="ok"><i class="ball"></i>OK</button>
              </div>
            </div>
          </section>

          <section class="dlg capture">
            <header class="dtitle blue"><span>Capture</span><span class="dbtn"><button class="wb"><svg viewBox="0 0 15 13" v-html="WB.q"></svg></button><button class="wb"><svg viewBox="0 0 15 13" v-html="WB.x"></svg></button></span></header>
            <div class="capbody">
              <svg class="planet" viewBox="0 0 46 24"><rect width="46" height="24" fill="url(#glow)" /><path d="M0 8C12 0 32 8 44 24H0Z" fill="#4f6f88" /><path d="M0 15C10 9 24 14 34 24H0Z" fill="#8fb2c4" /></svg>
              <span v-for="(k, i) in captureIcons" :key="k" class="cbtn" :class="{ pressed: i === 3, sep: i === 3 }"><svg viewBox="0 0 24 24" v-html="ICON[k]"></svg></span>
            </div>
          </section>
        </div>

        <div class="rtools">
          <div v-for="(c, i) in right" :key="i" class="vcell" :style="{ height: c.size + 'px' }">
            <i v-if="c.name === '|'" class="vh"></i>
            <i v-else-if="c.name === '-'" class="vh long"></i>
            <svg v-else class="ic" viewBox="0 0 24 24" v-html="ICON[c.name]"></svg>
            <i v-if="c.drop" class="drop"></i>
          </div>
        </div>
      </div>

      <div class="tbar bottom">
        <div v-for="(c, i) in bottom" :key="i" class="hcell" :style="{ width: c.size + 'px' }">
          <i v-if="c.name === '|'" class="handle b"></i>
          <svg v-else class="ic" viewBox="0 0 24 24" v-html="ICON[c.name]"></svg>
          <i v-if="c.drop" class="drop"></i>
        </div>
        <div class="combo"><span>Geometrical Set.1</span><i class="arrowbtn"></i></div>
        <svg class="logo" viewBox="0 0 44 32">
          <path d="M14 3C20 2 24 3 25 5L19 10C23 10 24 14 20 17" fill="none" stroke="#d8202c" stroke-width="1.600" />
          <path d="M32 7C26 6 21 8 24 11C29 14 28 19 21 20" fill="none" stroke="#f59a10" stroke-width="2" />
          <path d="M9 11C15 9 17 15 13 19C10 22 7 23 3 24L7 13" fill="none" stroke="#5a3a9a" stroke-width="1.800" />
          <text x="10" y="31" font-size="11" font-weight="700" font-style="italic" fill="#4a3a90" font-family="Liberation Sans">CATIA</text>
        </svg>
      </div>
      <div class="status">
        <span class="st-left">Capture</span>
        <span class="st-lab">Distance</span>
        <span class="st-in">0.001mm</span>
        <button class="st-b first"><svg viewBox="0 0 15 13"><rect x="2" y="1.500" width="9" height="8" fill="none" stroke="#000" stroke-width="1.500" /><rect x="11" y="9" width="2" height="2" /></svg></button>
        <button class="st-b"><svg viewBox="0 0 15 13"><rect x="3" y="1" width="9" height="10" rx="2" fill="#ddd" stroke="#888" /><path d="M7 3v6M6 9h3" stroke="#666" /></svg></button>
      </div>
    </div>

    <div class="side">
      <div class="s-title"><span class="btns"><button class="wb"><svg viewBox="0 0 15 13" v-html="WB.min"></svg></button><button class="wb"><svg viewBox="0 0 15 13" v-html="WB.res"></svg></button><button class="wb gap"><svg viewBox="0 0 15 13" v-html="WB.x"></svg></button></span></div>
      <div class="s-ribbon"><svg class="help" viewBox="0 0 14 14"><circle cx="7" cy="7" r="6.500" fill="#2b6cd8" stroke="#a8c4f0" /><text x="4.200" y="11" font-size="10" font-weight="700" font-style="italic" fill="#fff" font-family="Liberation Sans">?</text></svg></div>
      <div class="s-grad"></div>
      <div class="s-main">
        <div class="s-strip"></div>
        <div class="s-center">
          <div class="s-sub"><span class="btns"><button class="wb"><svg viewBox="0 0 15 13" v-html="WB.min"></svg></button><button class="wb"><svg viewBox="0 0 15 13" v-html="WB.res"></svg></button></span></div>
          <div class="s-beige a"></div>
          <div class="s-beige b"></div>
          <div class="s-white a"></div>
          <div class="s-beige c"></div>
          <div class="s-white b"></div>
        </div>
        <div class="s-scroll">
          <button class="sb up"><i></i></button>
          <div class="thumb"></div>
          <div class="track"></div>
          <button class="sb down"><i></i></button>
        </div>
      </div>
      <div class="s-h">
        <div class="hthumb"></div><div class="htrack"></div><button class="sb right"><i></i></button>
      </div>
      <div class="s-status">
        <span class="pct">100%</span>
        <i class="round">−</i>
        <span class="slider"><i class="knob2"></i></span>
        <i class="round">+</i>
      </div>
    </div>
  </div>
</template>

<style scoped>
.screen { width: 1920px; height: 1080px; display: flex; overflow: hidden; background: #d4d0c8; font-family: "Liberation Sans", Arial, sans-serif; color: #000; position: relative; }
.defs { position: absolute; }
button { padding: 0; margin: 0; font: inherit; color: inherit; }
i { display: block; font-style: normal; }
.ic { width: 24px; height: 24px; flex: none; overflow: visible; display: block; }

.catia { width: 1612px; height: 1080px; padding: 4px 4px 3px 6px; box-sizing: border-box; display: flex; flex-direction: column; background: #d4d0c8; box-shadow: inset 0 2px 0 #555, inset -1px 0 0 #555, inset 1px 0 0 #fff, inset -2px 0 0 #aaa; }
.title { height: 18px; background: #8f8f8f; display: flex; align-items: center; padding-left: 1px; flex: none; }
.appicon { width: 15px; height: 15px; flex: none; border: 1px solid #fff; box-sizing: content-box; }
.appicon.big { width: 17px; height: 17px; }
.title-text { margin-left: 1px; font-size: 12px; font-weight: 700; color: #cfcfcf; white-space: nowrap; letter-spacing: .1px; }
.btns { margin-left: auto; display: flex; padding-right: 2px; }
.wb { width: 15px; height: 13px; background: #d4d0c8; border: 0; box-shadow: inset 1px 1px 0 #fff, inset -1px -1px 0 #404040; display: block; flex: none; }
.wb svg { width: 15px; height: 13px; display: block; }
.wb.gap { margin-left: 3px; }
.menubar { height: 19px; background: #cfd0e4; display: flex; align-items: center; flex: none; font-size: 11px; }
.start { width: 43px; height: 19px; line-height: 19px; padding-left: 5px; box-sizing: border-box; background: #ffe2bc; margin-right: 5px; }
.mi { white-space: nowrap; flex: none; }
.tight { letter-spacing: -.5px; }
.tbar { flex: none; display: flex; background: linear-gradient(#fff 0, #fff 1px, #cfd0e4 9px, #cfd0e4 66%, #a8a9c6 97%, #a8a9c6 100%); }
.top { height: 39px; border-bottom: 2px solid #444; box-sizing: border-box; padding: 0 0 0 6px; position: relative; }
.handle { width: 2px; height: 14px; background: #fff; border: 1px solid #9a9ab0; margin-top: 4px; flex: none; }
.top .ic { margin-top: 5px; margin-right: -1px; }
.top .handle { margin-right: 3px; }

.middle { flex: 1; display: flex; min-height: 0; }
.viewport { width: 1565px; height: 933px; position: relative; flex: none; overflow: hidden; background: #333363; }
.scene { width: 1565px; height: 933px; display: block; }

.tree { position: absolute; left: 0; top: 100px; font-size: 13.5px; color: #fff; }
.row { height: 27.2px; display: flex; align-items: center; position: relative; white-space: nowrap; }
.l0 { padding-left: 1px; }
.l1 { padding-left: 9px; }
.l2 { padding-left: 29px; }
.l3 { padding-left: 29px; }
.branch { width: 11px; height: 2px; background: #fff; flex: none; }
.l3 .branch { height: 1px; }
.lbl { margin-left: 0; padding: 0 1px; height: 19px; line-height: 18px; border-radius: 2px; }
.l1 .lbl { margin-left: 1px; }
.sel { background: #333366; }
.hot { background: #ff8000; }
.ul { text-decoration: underline; }
.vl { position: absolute; width: 2px; background: #fff; }
.vl.a { left: 8px; top: 25px; height: 125px; }
.vl.b { left: 28px; top: 155px; height: 320px; }
.knob { position: absolute; width: 14px; height: 14px; border-radius: 50%; background: radial-gradient(circle at 40% 35%, #bbb, #666); z-index: 1; }
.knob::after { content: ""; position: absolute; left: 2px; right: 2px; top: 6px; height: 2px; background: #000; }
.l1 .knob { left: 2px; }
.l3 .knob { left: 22px; }
.knob.plus::before { content: ""; position: absolute; top: 2px; bottom: 2px; left: 6px; width: 2px; background: #000; }

.tip { position: absolute; left: 476px; top: 358px; height: 17px; line-height: 17px; width: 96px; background: #d8d800; font-size: 14px; white-space: nowrap; text-indent: -2px; }

.dlg { position: absolute; box-sizing: border-box; border: 3px solid #d4d0c8; box-shadow: inset 0 0 0 1px #e8e4dc, 0 0 0 1px #c0bcb4; background: #fae3c0; font-size: 11px; }
.join { left: 1219px; top: 581px; width: 336px; height: 342px; }
.capture { left: 1397px; top: 863px; width: 158px; height: 60px; }
.dtitle { height: 19px; box-sizing: border-box; padding-bottom: 1px; display: flex; align-items: center; justify-content: space-between; font-weight: 700; padding-left: 2px; font-size: 11px; }
.grey { background: linear-gradient(90deg, #8a8a8a, #d0d0d0); color: #d8d8d8; }
.blue { background: linear-gradient(90deg, #0a246a, #a6caf0); color: #fff; height: 20px; font-size: 12px; }
.dbtn { display: flex; gap: 2px; padding-right: 2px; }
.dbody { position: relative; height: 317px; box-sizing: border-box; padding: 15px 0 0 9px; background: #fae3c0; }
.group { width: 311px; height: 105px; box-sizing: border-box; border: 1px solid #8a8578; box-shadow: 1px 1px 0 #fff, inset 1px 1px 0 #fff; position: relative; padding: 11px 2px 0 2px; }
.legend { position: absolute; left: 7px; top: -7px; padding: 0 3px 0 2px; background: #fae3c0; white-space: nowrap; }
.list { height: 68px; box-sizing: border-box; background: #fff; border: 1px solid #666; border-top-width: 2px; color: #fff; }
.li { background: #0a246a; height: 13px; line-height: 13px; padding-left: 2px; }
.mode { display: flex; height: 21px; margin-top: 1px; }
.push { background: #f8e0bc; border: 0; box-shadow: inset 1px 1px 0 #fff, inset -1px -1px 0 #555, inset -2px -2px 0 #aaa; font-size: 11px; }
.m1 { flex: 146; }
.m2 { flex: 158; }
.tabs { display: flex; height: 23px; margin-top: 6px; align-items: flex-end; margin-left: 1px; }
.tab { height: 20px; line-height: 14px; padding-left: 11px; box-sizing: border-box; border-top: 1px solid #fff; border-left: 1px solid #fff; border-right: 2px solid #555; white-space: nowrap; }
.t1 { width: 79px; height: 23px; line-height: 21px; }
.t2 { width: 72px; margin-left: 1px; padding-left: 9px; }
.t3 { width: 146px; margin-left: 1px; padding-left: 9px; }
.panel { width: 308px; height: 127px; margin-left: 1px; box-sizing: border-box; border-right: 2px solid #333; border-bottom: 2px solid #111; border-left: 1px solid #fff; padding: 2px 0 0 4px; }
.prow { height: 21px; display: flex; align-items: center; }
.chk { display: flex; align-items: center; white-space: nowrap; flex: none; }
.box { width: 10px; height: 10px; border: 1px solid #444; background: #fffbe0; margin-right: 4px; box-shadow: inset -1px -1px 0 #fff; flex: none; }
.box.on { background: linear-gradient(135deg, #ffb040, #c06810); border-color: #fff; box-shadow: 0 0 0 1px #d8c8a8; }
.box.dimb { border-color: #888; background: #fae3c0; }
.dim { color: #9a9a90; }
.merge { height: 24px; margin-top: 1px; }
.flabel { width: 157px; flex: none; margin-left: -1px; }
.spin { display: flex; width: 123px; height: 19px; flex: none; border: 2px solid #555; border-right-color: #888; border-bottom-color: #888; box-sizing: border-box; background: #fff; }
.sval { flex: 1; line-height: 15px; padding-left: 3px; }
.sbtns { width: 16px; background: #d4d0c8; display: flex; flex-direction: column; border-left: 1px solid #888; }
.sbtns b { flex: 1; position: relative; border-bottom: 1px solid #666; }
.sbtns b::after { content: ""; position: absolute; left: 3px; top: 1px; border: 4px solid transparent; border-top: 0; border-bottom: 5px solid #222; }
.sbtns b.down::after { border-bottom: 0; border-top: 5px solid #222; top: 2px; }
.angular { height: 32px; }
.angular .chk { width: 156px; }
.dis { background: #d4d0c8; color: #888; }
.foot { height: 45px; padding: 13px 0 0 94px; box-sizing: border-box; }
.ok { width: 68px; height: 21px; display: flex; align-items: center; background: #cfd0e4; border: 0; box-shadow: inset 1px 1px 0 #fff, inset -1px -1px 0 #888; padding-left: 7px; font-size: 11px; }
.ball { width: 12px; height: 12px; border-radius: 50%; background: radial-gradient(circle at 40% 35%, #80ff80, #108010); margin-right: 15px; }
.planet { position: absolute; left: 0; bottom: 0; width: 46px; height: 24px; }
.capbody { position: relative; height: 35px; display: flex; align-items: center; padding-left: 7px; background: #fae3c0; gap: 1px; }
.cbtn { width: 21px; height: 22px; background: #fae3c0; box-shadow: inset -1px -1px 0 #333, inset 1px 1px 0 #fff; position: relative; flex: none; display: block; margin-top: -2px; }
.cbtn svg { width: 19px; height: 20px; display: block; margin: 1px; }
.pressed { background: #fff6e0; box-shadow: inset 1px 1px 0 #333, inset -1px -1px 0 #fff; }
.sep { margin-left: 5px; }

.rtools { width: 37px; flex: none; padding: 0 0 0 4px; box-sizing: border-box; overflow: hidden; background: linear-gradient(90deg, #fff 0, #fff 1px, #cfd0e4 6px, #cfd0e4 80%, #a8a9c6 100%); }
.vcell { position: relative; width: 24px; display: flow-root; }
.rtools > .vcell:first-child { margin-top: -9px; }
.vh { width: 14px; height: 2px; background: #fff; border-top: 1px solid #9a9ab0; margin: 11px 0 0 0; }
.vh.long { width: 27px; }
.drop { position: absolute; right: -6px; top: 17px; border: 4px solid transparent; border-bottom: 0; border-top: 5px solid #000; }

.bottom { height: 37px; position: relative; }
.hcell { position: relative; flex: none; height: 37px; padding-top: 7px; box-sizing: border-box; }
.bottom > .hcell:first-child { margin-left: -6px; }
.hcell .handle.b { margin: -3px 0 0 11px; }
.hcell .drop { top: 26px; right: auto; left: 17px; }
.combo { width: 149px; height: 20px; margin-top: 8px; flex: none; background: #fff; box-sizing: border-box; border: 1px solid #444; border-right-color: #ddd; border-bottom-color: #fff; display: flex; align-items: center; padding-left: 3px; font-size: 11px; }
.combo span { flex: 1; }
.arrowbtn { width: 16px; height: 17px; background: #d4d0c8; position: relative; box-shadow: inset -1px -1px 0 #555, inset 1px 1px 0 #fff; }
.arrowbtn::after { content: ""; position: absolute; left: 4px; top: 6px; border: 4px solid transparent; border-bottom: 0; border-top: 5px solid #000; }
.logo { position: absolute; right: 7px; top: 2px; width: 44px; height: 32px; }
.status { height: 27px; flex: none; background: #cfd0e4; border-top: 1px solid #444; display: flex; align-items: center; font-size: 12px; box-sizing: border-box; padding-right: 1px; }
.st-left { margin-left: 2px; width: 1187px; flex: none; }
.st-lab { width: 45px; flex: none; }
.st-in { width: 298px; height: 16px; flex: none; background: #fff; border: 1px solid #555; border-right-color: #fff; border-bottom-color: #fff; box-sizing: border-box; padding-left: 3px; line-height: 15px; font-size: 11px; }
.st-b { width: 33px; height: 21px; flex: none; background: #cfd0e4; border: 0; box-shadow: inset 1px 1px 0 #fff, inset -1px -1px 0 #333; margin-left: 1px; display: flex; align-items: center; justify-content: center; }
.st-b.first { margin-left: 3px; }
.st-b svg { width: 15px; height: 13px; }

.side { width: 308px; height: 1080px; flex: none; display: flex; flex-direction: column; }
.s-title { height: 18px; flex: none; background: #bdbdbd; border-top: 2px solid #555; box-sizing: border-box; display: flex; align-items: center; }
.s-ribbon { height: 25px; flex: none; background: #dfe8f4; border-bottom: 1px solid #aabcd8; box-sizing: border-box; display: flex; justify-content: flex-end; align-items: center; padding-right: 4px; }
.help { width: 14px; height: 14px; }
.s-grad { height: 97px; flex: none; background: linear-gradient(#fff, #e4ecf8 45%, #dce6f4 90%, #c8d2e4 92%, #c0cce0); border-bottom: 2px solid #555; box-sizing: border-box; }
.s-main { flex: 1; display: flex; min-height: 0; background: #fff; }
.s-strip { width: 5px; flex: none; background: #d4d0c8; border-right: 2px solid #666; border-left: 1px solid #666; box-sizing: border-box; }
.s-center { flex: 1; display: flex; flex-direction: column; background: #fff; }
.s-sub { height: 17px; background: #b8b8b8; display: flex; align-items: center; flex: none; }
.s-sub .btns { padding-right: 1px; }
.s-beige { background: #d4d0c8; flex: none; box-sizing: border-box; }
.s-beige.a { height: 20px; border-bottom: 1px solid #fff; }
.s-beige.b { height: 68px; border-bottom: 2px solid #444; box-shadow: inset 0 -4px 0 -1px #999; }
.s-white { background: #fff; flex: none; }
.s-white.a { height: 19px; box-shadow: inset 0 -1px 0 #aaa; }
.s-beige.c { height: 26px; border-top: 5px double #aaa; border-bottom: 1px solid #444; }
.s-white.b { flex: 1; }
.s-scroll { width: 15px; flex: none; display: flex; flex-direction: column; margin-top: -5px; position: relative; }
.sb { width: 15px; height: 14px; background: #d4d0c8; border: 0; box-shadow: inset 1px 1px 0 #fff, inset -1px -1px 0 #555; position: relative; flex: none; }
.sb i { position: absolute; left: 3px; top: 4px; border: 4px solid transparent; border-top: 0; border-bottom: 5px solid #000; }
.sb.down i { border-bottom: 0; border-top: 5px solid #000; }
.sb.right i { left: 5px; top: 3px; border: 4px solid transparent; border-right: 0; border-left: 5px solid #000; }
.thumb { height: 718px; flex: none; background: #d4d0c8; box-shadow: inset 1px 1px 0 #fff, inset -1px -1px 0 #666; margin-top: 2px; }
.track { flex: 1; background: repeating-conic-gradient(#d4d0c8 0 25%, #fff 0 50%) 0 0 / 2px 2px; }
.s-h { height: 16px; flex: none; display: flex; background: #fff; }
.hthumb { width: 249px; background: #d4d0c8; box-shadow: inset -1px -1px 0 #666, inset 1px 1px 0 #fff; flex: none; }
.htrack { width: 29px; background: repeating-conic-gradient(#d4d0c8 0 25%, #fff 0 50%) 0 0 / 2px 2px; flex: none; }
.s-status { height: 27px; flex: none; background: #d4d0c8; border-top: 1px solid #fff; box-sizing: border-box; display: flex; align-items: center; position: relative; font-size: 12px; padding-left: 129px; }
.s-status::before { content: ""; position: absolute; left: 110px; top: 0; bottom: 0; width: 2px; background: #fff; border-left: 1px solid #999; }
.pct { width: 37px; flex: none; }
.round { width: 14px; height: 14px; flex: none; border-radius: 50%; background: #d4d0c8; border: 1px solid #777; text-align: center; line-height: 13px; color: #555; font-weight: 700; }
.slider { width: 83px; height: 3px; flex: none; margin: 0 12px; background: #eee; border: 1px solid #777; position: relative; box-sizing: border-box; }
.knob2 { position: absolute; left: 37px; top: -10px; width: 8px; height: 21px; background: #d4d0c8; border: 1px solid #666; box-sizing: border-box; }
</style>
